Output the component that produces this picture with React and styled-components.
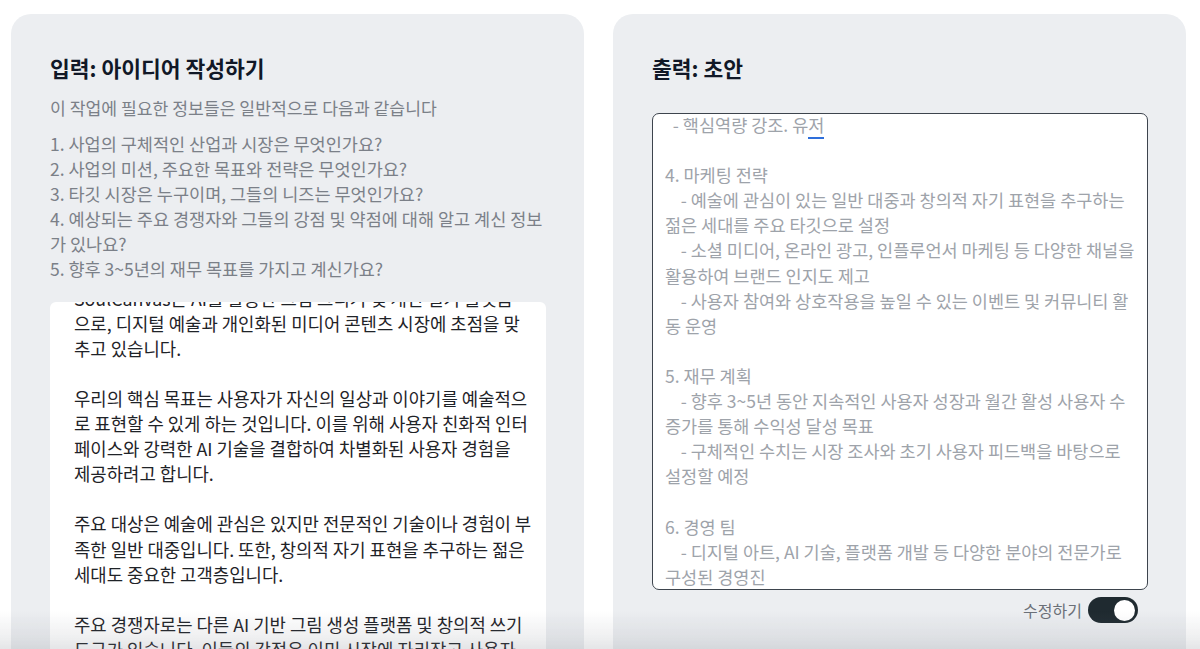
import React, { useEffect, useRef, useState } from "react";
import styled, { createGlobalStyle } from "styled-components";

const GlobalStyle = createGlobalStyle`
  html, body {
    margin: 0;
    padding: 0;
    background: #ffffff;
    overflow: hidden;
  }
  body {
    font-family: "Noto Sans CJK KR", "Noto Sans", sans-serif;
  }
  * {
    box-sizing: border-box;
  }
`;

const guideLines = [
  "1. 사업의 구체적인 산업과 시장은 무엇인가요?",
  "2. 사업의 미션, 주요한 목표와 전략은 무엇인가요?",
  "3. 타깃 시장은 누구이며, 그들의 니즈는 무엇인가요?",
  "4. 예상되는 주요 경쟁자와 그들의 강점 및 약점에 대해 알고 계신 정보",
  "가 있나요?",
  "5. 향후 3~5년의 재무 목표를 가지고 계신가요?",
];

const ideaText = [
  "SoulCanvas는 AI를 활용한 그림 그리기 및 개인 일기 플랫폼",
  "으로, 디지털 예술과 개인화된 미디어 콘텐츠 시장에 초점을 맞",
  "추고 있습니다.",
  "",
  "우리의 핵심 목표는 사용자가 자신의 일상과 이야기를 예술적으",
  "로 표현할 수 있게 하는 것입니다. 이를 위해 사용자 친화적 인터",
  "페이스와 강력한 AI 기술을 결합하여 차별화된 사용자 경험을",
  "제공하려고 합니다.",
  "",
  "주요 대상은 예술에 관심은 있지만 전문적인 기술이나 경험이 부",
  "족한 일반 대중입니다. 또한, 창의적 자기 표현을 추구하는 젊은",
  "세대도 중요한 고객층입니다.",
  "",
  "주요 경쟁자로는 다른 AI 기반 그림 생성 플랫폼 및 창의적 쓰기",
  "도구가 있습니다. 이들의 강점은 이미 시장에 자리잡고 사용자",
  "기반을 확보했다는 점입니다.",
].join("\n");

const draftText = [
  "",
  "4. 마케팅 전략",
  "    - 예술에 관심이 있는 일반 대중과 창의적 자기 표현을 추구하는",
  "젊은 세대를 주요 타깃으로 설정",
  "    - 소셜 미디어, 온라인 광고, 인플루언서 마케팅 등 다양한 채널을",
  "활용하여 브랜드 인지도 제고",
  "    - 사용자 참여와 상호작용을 높일 수 있는 이벤트 및 커뮤니티 활",
  "동 운영",
  "",
  "5. 재무 계획",
  "    - 향후 3~5년 동안 지속적인 사용자 성장과 월간 활성 사용자 수",
  "증가를 통해 수익성 달성 목표",
  "    - 구체적인 수치는 시장 조사와 초기 사용자 피드백을 바탕으로",
  "설정할 예정",
  "",
  "6. 경영 팀",
  "    - 디지털 아트, AI 기술, 플랫폼 개발 등 다양한 분야의 전문가로",
  "구성된 경영진",
].join("\n");

const App = () => {
  const ideaRef = useRef(null);
  const draftRef = useRef(null);
  const [editable, setEditable] = useState(true);

  useEffect(() => {
    if (ideaRef.current) ideaRef.current.scrollTop = 16;
    if (draftRef.current) draftRef.current.scrollTop = 2;
  }, []);

  return (
    <>
      <GlobalStyle />
      <Page>
        <Card>
          <Title>입력: 아이디어 작성하기</Title>
          <Hint>이 작업에 필요한 정보들은 일반적으로 다음과 같습니다</Hint>
          <GuideList>
            {guideLines.map((line) => (
              <li key={line}>{line}</li>
            ))}
          </GuideList>
          <IdeaBox ref={ideaRef}>
            <IdeaText>{ideaText}</IdeaText>
          </IdeaBox>
        </Card>

        <Card>
          <Title>출력: 초안</Title>
          <DraftBox ref={draftRef}>
            <DraftText>
              {"  - 핵심역량 강조. 유"}
              <Composing>저</Composing>
              {"\n"}
              {draftText}
            </DraftText>
          </DraftBox>
          <ToggleRow>
            <ToggleLabel>수정하기</ToggleLabel>
            <Switch
              type="button"
              $on={editable}
              onClick={() => setEditable(!editable)}
            >
              <Knob />
            </Switch>
          </ToggleRow>
        </Card>
      </Page>
      <BottomFade />
    </>
  );
};

const Page = styled.div`
  display: grid;
  grid-template-columns: 1fr 1fr;
  gap: 29px;
  height: 100vh;
  padding: 14px 14px 0 11px;
`;

const Card = styled.section`
  display: flex;
  flex-direction: column;
  min-height: 0;
  padding: 40px 38px 0 39px;
  background: #eceef1;
  border-radius: 20px 20px 0 0;
  overflow: hidden;
`;

const Title = styled.h2`
  margin: 0;
  font-size: 21.5px;
  font-weight: 700;
  line-height: 28px;
  color: #111827;
`;

const Hint = styled.p`
  margin: 13px 0 0;
  font-size: 17.2px;
  line-height: 25px;
  color: #7b8088;
`;

const GuideList = styled.ul`
  margin: 11px 0 0;
  padding: 0;
  list-style: none;
  font-size: 17.5px;
  line-height: 25.1px;
  color: #7b8088;
`;

const IdeaBox = styled.div`
  flex: 1;
  min-height: 0;
  margin-top: 20px;
  padding: 0 24px;
  background: #ffffff;
  border-radius: 6px 6px 0 0;
  overflow: hidden;
`;

const IdeaText = styled.div`
  white-space: pre;
  font-size: 17.8px;
  line-height: 25.1px;
  color: #1f2328;
  padding-bottom: 40px;
`;

const DraftBox = styled.div`
  height: 477px;
  margin-top: 31px;
  padding: 0 12px;
  background: #ffffff;
  border: 1.5px solid #3d444d;
  border-radius: 7px;
  overflow: hidden;
`;

const DraftText = styled.div`
  white-space: pre;
  font-size: 17.5px;
  line-height: 25.1px;
  color: #9ea3aa;
`;

const Composing = styled.span`
  border-bottom: 2px solid #2f6fdb;
`;

const ToggleRow = styled.div`
  display: flex;
  justify-content: flex-end;
  align-items: center;
  gap: 6px;
  margin-top: 7px;
  padding-right: 10px;
`;

const ToggleLabel = styled.span`
  font-size: 16px;
  color: #6b7078;
`;

const Switch = styled.button`
  display: flex;
  align-items: center;
  justify-content: ${(p) => (p.$on ? "flex-end" : "flex-start")};
  width: 50px;
  height: 26px;
  padding: 0 3px;
  border: none;
  border-radius: 13px;
  background: ${(p) => (p.$on ? "#1f2a30" : "#c5c9cf")};
  cursor: pointer;
`;

const Knob = styled.span`
  width: 21px;
  height: 21px;
  border-radius: 50%;
  background: #ffffff;
`;

const BottomFade = styled.div`
  position: fixed;
  left: 0;
  right: 0;
  bottom: 0;
  height: 38px;
  pointer-events: none;
  background: linear-gradient(
    to bottom,
    rgba(120, 125, 135, 0) 0%,
    rgba(120, 125, 135, 0.12) 70%,
    rgba(120, 125, 135, 0.2) 100%
  );
`;

export default App;
